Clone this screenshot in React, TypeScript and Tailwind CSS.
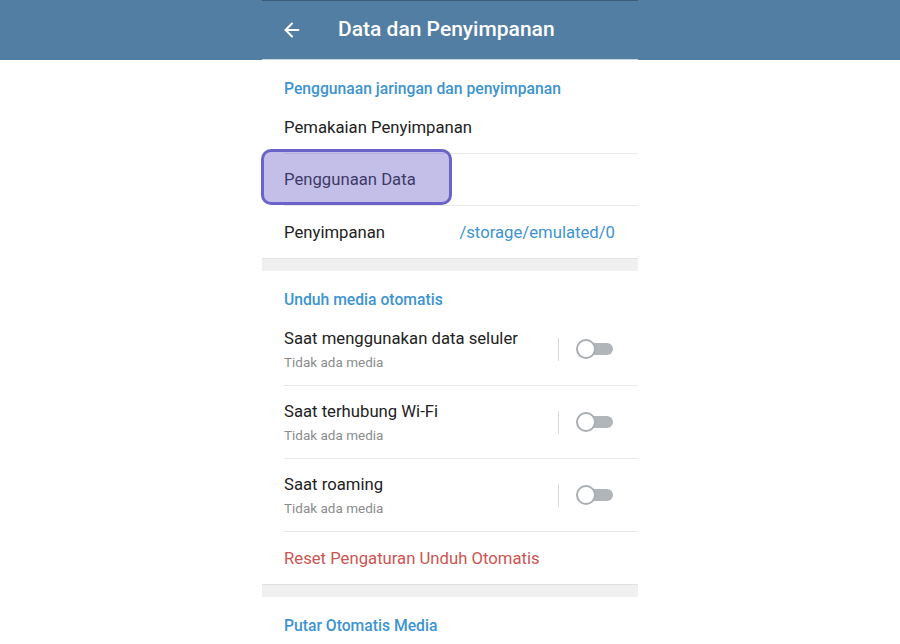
import { ArrowLeft } from "lucide-react"

const font = { fontFamily: "Roboto, 'Noto Sans', Arial, sans-serif" }

type MediaRow = { title: string; subtitle: string }

const mediaRows: MediaRow[] = [
  { title: "Saat menggunakan data seluler", subtitle: "Tidak ada media" },
  { title: "Saat terhubung Wi-Fi", subtitle: "Tidak ada media" },
  { title: "Saat roaming", subtitle: "Tidak ada media" },
]

function SectionTitle({ children }: { children: string }) {
  return (
    <div className="h-[42px] px-[22px] pt-[19px]">
      <div className="text-[15.7px] leading-5 font-medium text-[#3d94d0]">{children}</div>
    </div>
  )
}

function Divider() {
  return <div className="ml-[22px] h-px bg-[#e8e8e8]" />
}

function Band() {
  return <div className="h-[13px] border-t border-[#e2e2e2] bg-[#f0f0f0]" />
}

function Toggle() {
  return (
    <div className="flex items-center gap-[18px] pr-[25px]">
      <div className="h-[23px] w-px bg-[#d9d9d9]" />
      <div className="relative h-[12px] w-[36px] rounded-full bg-[#b0b5ba]">
        <div className="absolute -left-px -top-[4px] h-[20px] w-[20px] rounded-full border-2 border-[#a9aeb3] bg-white" />
      </div>
    </div>
  )
}

export default function App() {
  return (
    <div className="min-h-screen bg-white" style={font}>
      {/* toolbar */}
      <header className="h-[60px] bg-[#527ea3]">
        <div className="mx-auto flex h-[60px] w-[376px] items-center border-t border-[#3b5d7c] border-b border-b-[#c9d5df]">
          <div className="flex w-[76px] items-center pl-[19px]">
            <ArrowLeft className="h-[22px] w-[22px] text-white" strokeWidth={2.2} />
          </div>
          <h1 className="text-[21px] font-medium text-white">Data dan Penyimpanan</h1>
        </div>
      </header>

      <main className="mx-auto w-[376px]">
        <SectionTitle>Penggunaan jaringan dan penyimpanan</SectionTitle>
        <div className="flex h-[51px] items-center px-[22px] pt-px text-[16.7px] text-[#222]">Pemakaian Penyimpanan</div>
        <Divider />
        <div className="relative flex h-[51px] items-center px-[22px] pt-px text-[16.7px] text-[#222]">
          Penggunaan Data
          {/* highlight overlay */}
          <div className="absolute -left-px -top-[5px] h-[56px] w-[191px] rounded-[10px] border-[3px] border-[#6b63c8] bg-[#6a60c8]/40" />
        </div>
        <Divider />
        <div className="flex h-[52px] items-center justify-between pl-[22px] pr-[23px] pt-px text-[16.7px]">
          <span className="text-[#222]">Penyimpanan</span>
          <span className="text-[#3d94d0]">/storage/emulated/0</span>
        </div>
        <Band />

        <SectionTitle>Unduh media otomatis</SectionTitle>
        {mediaRows.map((row) => (
          <div key={row.title}>
            <div className="flex h-[72px] items-center justify-between">
              <div className="pl-[22px] pt-px">
                <div className="text-[16.7px] leading-5 text-[#222]">{row.title}</div>
                <div className="mt-[5px] text-[13.5px] leading-4 text-[#8c8c8c]">{row.subtitle}</div>
              </div>
              <Toggle />
            </div>
            <Divider />
          </div>
        ))}
        <div className="flex h-[52px] items-center px-[22px] pt-px text-[16.7px] text-[#cc5551]">
          Reset Pengaturan Unduh Otomatis
        </div>
        <Band />

        <SectionTitle>Putar Otomatis Media</SectionTitle>
      </main>
    </div>
  )
}
